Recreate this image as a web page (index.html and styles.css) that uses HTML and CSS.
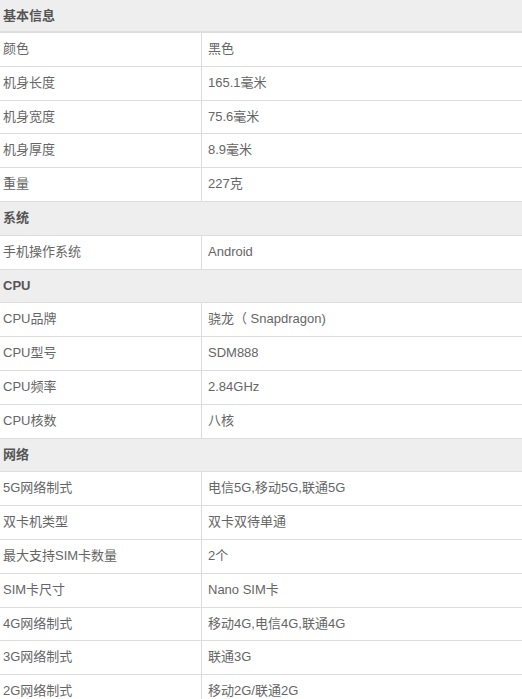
FILE: index.html
```html
<!DOCTYPE html>
<html lang="zh">
<head>
<meta charset="utf-8">
<link rel="stylesheet" href="styles.css">
</head>
<body>
<div class="spec">
  <div class="sec">基本信息</div>
  <div class="row"><div class="k">颜色</div><div class="v">黑色</div></div>
  <div class="row"><div class="k">机身长度</div><div class="v">165.1毫米</div></div>
  <div class="row"><div class="k">机身宽度</div><div class="v">75.6毫米</div></div>
  <div class="row"><div class="k">机身厚度</div><div class="v">8.9毫米</div></div>
  <div class="row"><div class="k">重量</div><div class="v">227克</div></div>
  <div class="sec">系统</div>
  <div class="row"><div class="k">手机操作系统</div><div class="v">Android</div></div>
  <div class="sec">CPU</div>
  <div class="row"><div class="k">CPU品牌</div><div class="v">骁龙（ Snapdragon)</div></div>
  <div class="row"><div class="k">CPU型号</div><div class="v">SDM888</div></div>
  <div class="row"><div class="k">CPU频率</div><div class="v">2.84GHz</div></div>
  <div class="row"><div class="k">CPU核数</div><div class="v">八核</div></div>
  <div class="sec">网络</div>
  <div class="row"><div class="k">5G网络制式</div><div class="v">电信5G,移动5G,联通5G</div></div>
  <div class="row"><div class="k">双卡机类型</div><div class="v">双卡双待单通</div></div>
  <div class="row"><div class="k">最大支持SIM卡数量</div><div class="v">2个</div></div>
  <div class="row"><div class="k">SIM卡尺寸</div><div class="v">Nano SIM卡</div></div>
  <div class="row"><div class="k">4G网络制式</div><div class="v">移动4G,电信4G,联通4G</div></div>
  <div class="row"><div class="k">3G网络制式</div><div class="v">联通3G</div></div>
  <div class="row"><div class="k">2G网络制式</div><div class="v">移动2G/联通2G</div></div>
</div>
</body>
</html>
```

FILE: styles.css
```css
html, body {
  margin: 0;
  padding: 0;
  background: #fff;
}
body {
  font-family: "Liberation Sans", "Noto Sans CJK SC", sans-serif;
  font-size: 13px;
  color: #666;
}
.spec {
  width: 522px;
}
.sec {
  height: 32.8px;
  line-height: 31px;
  box-sizing: content-box;
  padding-left: 3px;
  background: #eeeeee;
  border-bottom: 1px solid #dddddd;
  font-weight: bold;
  color: #555;
}
.sec:first-child {
  height: 31px;
  border-bottom-width: 2px;
}
.row {
  display: flex;
  height: 32.8px;
  border-bottom: 1px solid #dddddd;
}
.k {
  width: 202px;
  padding-left: 3px;
  box-sizing: border-box;
  border-right: 1px solid #dddddd;
  line-height: 32.8px;
}
.v {
  flex: 1;
  padding-left: 6px;
  line-height: 32.8px;
}
```
